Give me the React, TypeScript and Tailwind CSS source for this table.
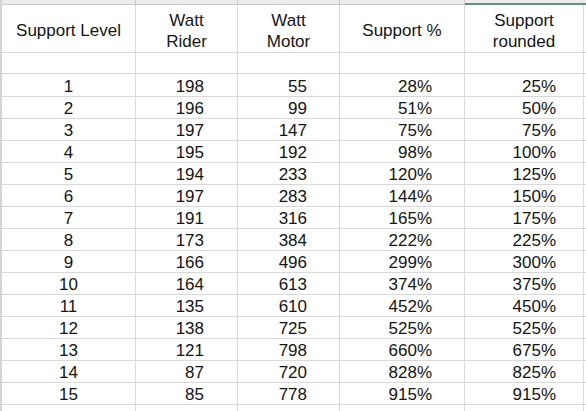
import React from "react";

const rows: [number, number, number, string, string][] = [
  [1, 198, 55, "28%", "25%"],
  [2, 196, 99, "51%", "50%"],
  [3, 197, 147, "75%", "75%"],
  [4, 195, 192, "98%", "100%"],
  [5, 194, 233, "120%", "125%"],
  [6, 197, 283, "144%", "150%"],
  [7, 191, 316, "165%", "175%"],
  [8, 173, 384, "222%", "225%"],
  [9, 166, 496, "299%", "300%"],
  [10, 164, 613, "374%", "375%"],
  [11, 135, 610, "452%", "450%"],
  [12, 138, 725, "525%", "525%"],
  [13, 121, 798, "660%", "675%"],
  [14, 87, 720, "828%", "825%"],
  [15, 85, 778, "915%", "915%"],
];

const grid = "grid shrink-0 grid-cols-[134px_102px_102px_125px_119px_1fr]";
const cell = "border-r border-b border-[#d9d9d9]";
const band = "border-r border-b border-[#c9c9c9] bg-[#ececec]";

export default function App() {
  return (
    <div
      className="w-[586px] h-[411px] overflow-hidden bg-white text-[#141414] text-[17px]"
      style={{ fontFamily: '"Liberation Sans", Arial, sans-serif' }}
    >
      <div className="flex h-full">
        <div className="w-[2px] shrink-0 bg-[#d4d4d4]" />
        <div className="flex-1 flex flex-col">
          <div className={grid + " h-[5px]"}>
            <div className={band} />
            <div className={band} />
            <div className={band} />
            <div className={band} />
            <div className="col-span-2 bg-[#ececec] border-b-2 border-[#5f9483]" />
          </div>
          <div className={grid + " h-[48px] leading-[21px]"}>
            <div className={cell + " flex items-center justify-center pt-[4px]"}>Support Level</div>
            <div className={cell + " flex flex-col items-center justify-center pt-[4px]"}>
              <span>Watt</span>
              <span>Rider</span>
            </div>
            <div className={cell + " flex flex-col items-center justify-center pt-[4px]"}>
              <span>Watt</span>
              <span>Motor</span>
            </div>
            <div className={cell + " flex items-center justify-center pt-[4px]"}>Support %</div>
            <div className={cell + " flex flex-col items-center justify-center pt-[4px]"}>
              <span>Support</span>
              <span>rounded</span>
            </div>
            <div className="border-b border-[#d9d9d9]" />
          </div>
          <div className={grid + " h-[21px]"}>
            <div className={cell} />
            <div className={cell} />
            <div className={cell} />
            <div className={cell} />
            <div className={cell} />
            <div className="border-b border-[#d9d9d9]" />
          </div>
          {rows.map((r) => (
            <div key={r[0]} className={grid + " h-[22px] leading-[19px]"}>
              <div className={cell + " text-center pt-[3px]"}>{r[0]}</div>
              <div className={cell + " text-right pr-[33px] pt-[3px]"}>{r[1]}</div>
              <div className={cell + " text-right pr-[32px] pt-[3px]"}>{r[2]}</div>
              <div className={cell + " text-right pr-[32px] pt-[3px]"}>{r[3]}</div>
              <div className={cell + " text-right pr-[27px] pt-[3px]"}>{r[4]}</div>
              <div className="border-b border-[#d9d9d9]" />
            </div>
          ))}
          <div className={grid + " h-[22px]"}>
            <div className={cell} />
            <div className={cell} />
            <div className={cell} />
            <div className={cell} />
            <div className={cell} />
            <div className="border-b border-[#d9d9d9]" />
          </div>
        </div>
      </div>
    </div>
  );
}
